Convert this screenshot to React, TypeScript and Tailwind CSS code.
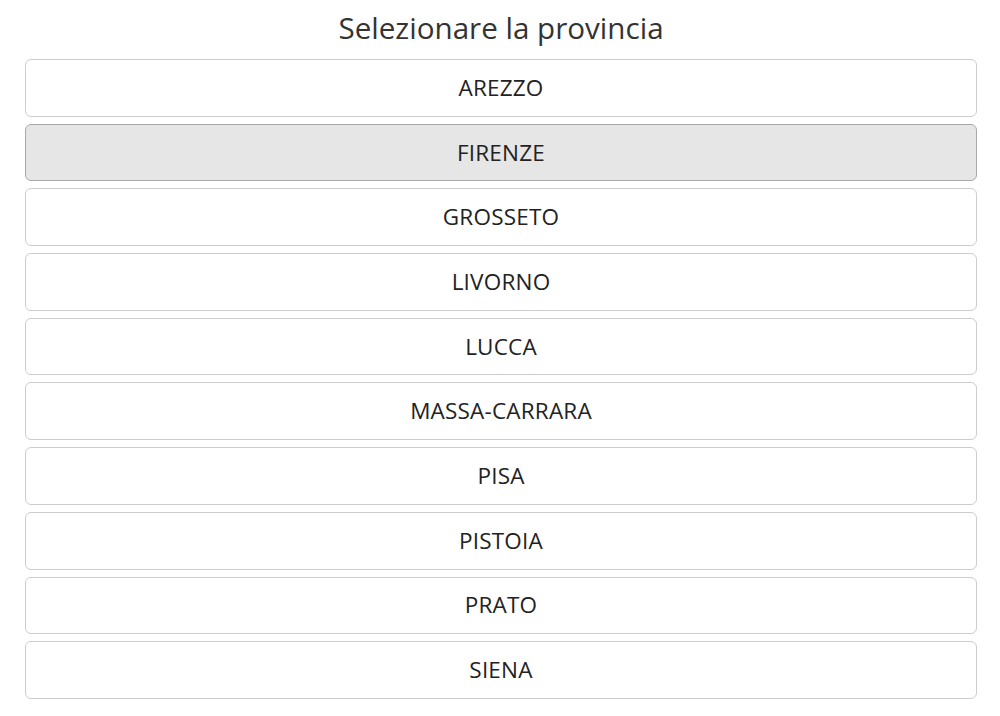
import React, { useState } from 'react';

const PROVINCE = [
  'AREZZO',
  'FIRENZE',
  'GROSSETO',
  'LIVORNO',
  'LUCCA',
  'MASSA-CARRARA',
  'PISA',
  'PISTOIA',
  'PRATO',
  'SIENA',
];

export default function App() {
  const [selected, setSelected] = useState('FIRENZE');

  return (
    <div className="min-h-screen bg-white pl-[25px] pr-[23px] pt-[8px] font-['Open_Sans',sans-serif] text-[#222]">
      <h1 className="text-center text-[29.6px] leading-[40px] text-[#333]">Selezionare la provincia</h1>
      <div className="mt-[11px] flex flex-col gap-[7px]">
        {PROVINCE.map((p) => (
          <button
            key={p}
            type="button"
            onClick={() => setSelected(p)}
            className={`h-[57.7px] w-full rounded-[6px] border text-[22.5px] tracking-[0.2px] text-[#222] ${
              selected === p ? 'border-[#a9a9a9] bg-[#e6e6e6]' : 'border-[#cdcdcd] bg-white'
            }`}
          >
            {p}
          </button>
        ))}
      </div>
    </div>
  );
}
